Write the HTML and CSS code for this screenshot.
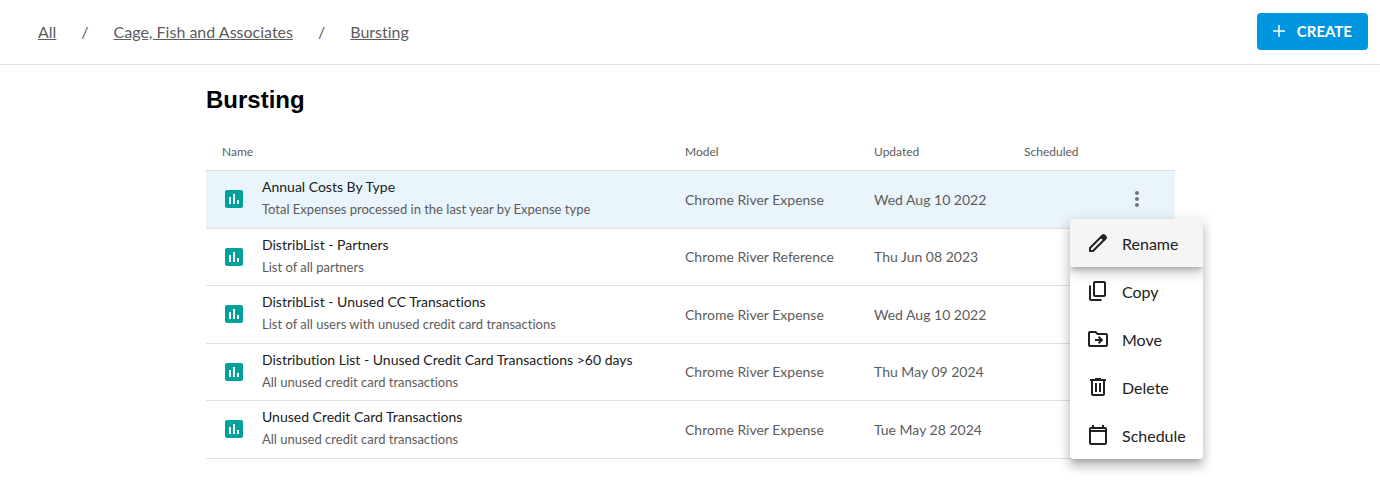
FILE: index.html
```html
<!DOCTYPE html>
<html lang="en">
  <head>
    <meta charset="UTF-8" />
    <meta name="viewport" content="width=device-width, initial-scale=1.0" />
    <title>Bursting</title>
    <link rel="stylesheet" href="styles.css">
  </head>

  <body>
    <!-- shared icon shapes -->
    <svg class="sprite" aria-hidden="true">
      <symbol id="icon-chart" viewBox="0 0 24 24">
        <path d="M19 3H5c-1.100 0-2 .9-2 2v14c0 1.100.9 2 2 2h14c1.100 0 2-.9 2-2V5c0-1.100-.9-2-2-2zM9 17H7v-7h2v7zm4 0h-2V7h2v10zm4 0h-2v-4h2v4z" />
      </symbol>
    </svg>

    <header class="topbar">
      <nav class="breadcrumbs" aria-label="Breadcrumb">
        <a href="#">All</a>
        <span>/</span>
        <a href="#">Cage, Fish and Associates</a>
        <span>/</span>
        <a href="#">Bursting</a>
      </nav>
      <button class="create-button" type="button">
        <svg class="plus" viewBox="0 0 12 12" aria-hidden="true">
          <path d="M6 0v12M0 6h12" />
        </svg>
        CREATE
      </button>
    </header>

    <main class="content">
      <h1 class="page-title">Bursting</h1>

      <table class="reports">
        <thead>
          <tr>
            <th class="col-name">Name</th>
            <th class="col-model">Model</th>
            <th class="col-updated">Updated</th>
            <th class="col-scheduled">Scheduled</th>
            <th class="col-actions"></th>
          </tr>
        </thead>
        <tbody>
          <tr class="selected">
            <td>
              <div class="report">
                <svg class="report-icon" aria-hidden="true"><use href="#icon-chart" /></svg>
                <div class="report-text">
                  <div class="report-name">Annual Costs By Type</div>
                  <div class="report-info">Total Expenses processed in the last year by Expense type</div>
                </div>
              </div>
            </td>
            <td>Chrome River Expense</td>
            <td>Wed Aug 10 2022</td>
            <td></td>
            <td>
              <div class="actions">
                <button class="more-button" type="button" aria-label="More actions">
                  <svg viewBox="0 0 24 24" aria-hidden="true">
                    <path d="M12 8c1.100 0 2-.9 2-2s-.9-2-2-2-2 .9-2 2 .9 2 2 2zm0 2c-1.100 0-2 .9-2 2s.9 2 2 2 2-.9 2-2-.9-2-2-2zm0 6c-1.100 0-2 .9-2 2s.9 2 2 2 2-.9 2-2-.9-2-2-2z" />
                  </svg>
                </button>
                <div class="menu" role="menu">
                  <button class="menu-item active" type="button" role="menuitem">
                    <svg viewBox="0 0 24 24" aria-hidden="true">
                      <path d="M4 20v-3L15.500 5.500l3 3L7 20z" fill="none" stroke="currentColor" stroke-width="2" stroke-linejoin="round" />
                      <path d="M13.700 5.900l2.200-2.200c.9-.9 2.300-.9 3.200 0l1.200 1.200c.9.9.9 2.300 0 3.200l-2.200 2.200z" />
                    </svg>
                    Rename
                  </button>
                  <button class="menu-item" type="button" role="menuitem">
                    <svg viewBox="0 0 24 24" aria-hidden="true">
                      <path d="M18 2H9c-1.100 0-2 .9-2 2v12c0 1.100.9 2 2 2h9c1.100 0 2-.9 2-2V4c0-1.100-.9-2-2-2zm0 14H9V4h9v12zM3 6.500h2V20h10.500v2H5c-1.100 0-2-.9-2-2z" />
                    </svg>
                    Copy
                  </button>
                  <button class="menu-item" type="button" role="menuitem">
                    <svg viewBox="0 0 24 24" aria-hidden="true">
                      <path d="M20 6h-8l-2-2H4c-1.100 0-2 .9-2 2v12c0 1.100.9 2 2 2h16c1.100 0 2-.9 2-2V8c0-1.100-.9-2-2-2zm0 12H4V6h5.170l2 2H20v10zm-8.160-2.410L13.250 17l4-4-4-4-1.410 1.410L13.430 12H9v2h4.430l-1.590 1.590z" />
                    </svg>
                    Move
                  </button>
                  <button class="menu-item" type="button" role="menuitem">
                    <svg viewBox="0 0 24 24" aria-hidden="true">
                      <path d="M15 4V3H9v1H4v2h1v13c0 1.100.9 2 2 2h10c1.100 0 2-.9 2-2V6h1V4h-5zm2 15H7V6h10v13zM9 8h2v9H9V8zm4 0h2v9h-2V8z" />
                    </svg>
                    Delete
                  </button>
                  <button class="menu-item" type="button" role="menuitem">
                    <svg viewBox="0 0 24 24" aria-hidden="true">
                      <path d="M19 4h-1V2h-2v2H8V2H6v2H5c-1.110 0-2 .9-2 2v14c0 1.100.89 2 2 2h14c1.100 0 2-.9 2-2V6c0-1.100-.9-2-2-2zm0 16H5V9h14v11zm0-13H5V6h14v1z" />
                    </svg>
                    Schedule
                  </button>
                </div>
              </div>
            </td>
          </tr>
          <tr>
            <td>
              <div class="report">
                <svg class="report-icon" aria-hidden="true"><use href="#icon-chart" /></svg>
                <div class="report-text">
                  <div class="report-name">DistribList - Partners</div>
                  <div class="report-info">List of all partners</div>
                </div>
              </div>
            </td>
            <td>Chrome River Reference</td>
            <td>Thu Jun 08 2023</td>
            <td></td>
            <td></td>
          </tr>
          <tr>
            <td>
              <div class="report">
                <svg class="report-icon" aria-hidden="true"><use href="#icon-chart" /></svg>
                <div class="report-text">
                  <div class="report-name">DistribList - Unused CC Transactions</div>
                  <div class="report-info">List of all users with unused credit card transactions</div>
                </div>
              </div>
            </td>
            <td>Chrome River Expense</td>
            <td>Wed Aug 10 2022</td>
            <td></td>
            <td></td>
          </tr>
          <tr>
            <td>
              <div class="report">
                <svg class="report-icon" aria-hidden="true"><use href="#icon-chart" /></svg>
                <div class="report-text">
                  <div class="report-name">Distribution List - Unused Credit Card Transactions &gt;60 days</div>
                  <div class="report-info">All unused credit card transactions</div>
                </div>
              </div>
            </td>
            <td>Chrome River Expense</td>
            <td>Thu May 09 2024</td>
            <td></td>
            <td></td>
          </tr>
          <tr>
            <td>
              <div class="report">
                <svg class="report-icon" aria-hidden="true"><use href="#icon-chart" /></svg>
                <div class="report-text">
                  <div class="report-name">Unused Credit Card Transactions</div>
                  <div class="report-info">All unused credit card transactions</div>
                </div>
              </div>
            </td>
            <td>Chrome River Expense</td>
            <td>Tue May 28 2024</td>
            <td></td>
            <td></td>
          </tr>
        </tbody>
      </table>
    </main>
  </body>
</html>
```
FILE: styles.css
```css
:root {
  --text: #212121;
  --muted: #5c5c5c;
  --line: #e0e0e0;
  --blue: #0096df;
  --teal: #00a19b;
}
* {
  box-sizing: border-box;
}
body {
  margin: 0;
  background: white;
  color: var(--text);
  font-family: Lato, sans-serif;
  font-size: 14px;
  font-variant-ligatures: none;
}
button {
  border: none;
  font-family: inherit;
  font-variant-ligatures: inherit;
  cursor: pointer;
}
svg {
  flex-shrink: 0;
  fill: currentColor;
}
.sprite {
  display: none;
}

.topbar {
  display: flex;
  justify-content: space-between;
  align-items: center;
  height: 65px;
  padding: 0 12px 2px 38px;
  border-bottom: 1px solid var(--line);
}
.breadcrumbs {
  display: flex;
  gap: 25px;
  color: var(--muted);
  font-size: 16px;
}
.breadcrumbs a {
  color: inherit;
}
.create-button {
  display: flex;
  align-items: center;
  gap: 12px;
  height: 37px;
  padding: 0 16px;
  border-radius: 4px;
  background: var(--blue);
  color: white;
  font-size: 15px;
  font-weight: bold;
}
.plus {
  width: 12px;
  height: 12px;
  stroke: currentColor;
  stroke-width: 1.5;
}

.content {
  padding: 20px 205px 27px 206px;
}
.page-title {
  margin: 0;
  color: black;
  font-family: "Liberation Sans", sans-serif;
  font-size: 24px;
  line-height: 30px;
}

.reports {
  width: 100%;
  margin-top: 18px;
  border-collapse: separate;
  border-spacing: 0;
  table-layout: fixed;
}
.reports th {
  height: 38px;
  padding: 0 16px;
  border-bottom: 1px solid var(--line);
  color: var(--muted);
  font-size: 12px;
  font-weight: normal;
  text-align: left;
}
.reports td {
  height: 58px;
  padding: 0 16px 1px;
  border-bottom: 1px solid var(--line);
  color: var(--muted);
  white-space: nowrap;
}
.reports tr:nth-child(even) td {
  height: 57px;
}
.reports .selected {
  background: #e9f4fb;
}
.col-model {
  width: 189px;
}
.col-updated {
  width: 150px;
}
.col-scheduled {
  width: 90px;
}
.col-actions {
  width: 77px;
}

.report {
  display: flex;
  align-items: center;
  gap: 16px;
}
.report-icon {
  width: 24px;
  height: 24px;
  color: var(--teal);
}
.report-text {
  padding-bottom: 2px;
}
.report-name {
  color: var(--text);
  line-height: 22px;
}
.report-info {
  font-size: 13px;
  line-height: 22px;
}

.actions {
  position: relative;
  display: flex;
  justify-content: center;
}
.more-button {
  display: flex;
  padding: 0;
  background: none;
  color: #757575;
}
.more-button svg {
  width: 24px;
  height: 24px;
}
.menu {
  position: absolute;
  top: 32px;
  right: -44px;
  z-index: 1;
  overflow: hidden;
  min-width: 133px;
  border-radius: 4px;
  background: white;
  box-shadow: 0 5px 5px -3px rgba(0, 0, 0, 0.2),
    0 8px 10px 1px rgba(0, 0, 0, 0.14), 0 3px 14px 2px rgba(0, 0, 0, 0.12);
}
.menu-item {
  display: flex;
  align-items: center;
  gap: 12px;
  width: 100%;
  height: 48px;
  padding: 0 16px;
  background: white;
  color: var(--text);
  font-size: 16px;
}
.menu-item svg {
  width: 24px;
  height: 24px;
}
.menu-item.active {
  position: relative;
  background: #f5f5f5;
  box-shadow: 0 3px 5px -1px rgba(0, 0, 0, 0.2),
    0 6px 10px 0 rgba(0, 0, 0, 0.14), 0 1px 18px 0 rgba(0, 0, 0, 0.12);
}
```
